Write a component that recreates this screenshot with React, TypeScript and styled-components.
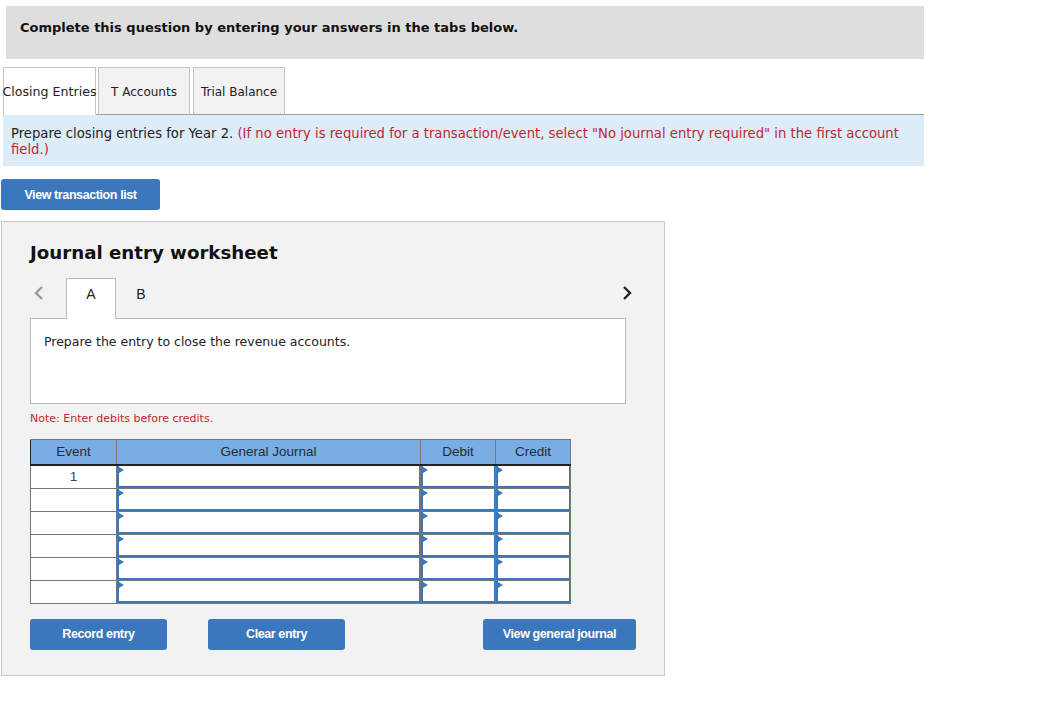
import styled, { createGlobalStyle } from 'styled-components';

const GlobalStyle = createGlobalStyle`
  body {
    margin: 0;
    background: #ffffff;
    font-family: 'DejaVu Sans', Verdana, sans-serif;
    color: #222;
  }
`;

const Page = styled.div`
  width: 1045px;
  padding-top: 6px;
  padding-bottom: 20px;
`;

const Banner = styled.div`
  margin-left: 6px;
  width: 918px;
  height: 53px;
  background: #dedede;
  padding: 13px 0 0 14px;
  box-sizing: border-box;
  font-size: 13px;
  line-height: 18px;
  font-weight: bold;
  color: #111;
`;

const TabBar = styled.div`
  margin: 8px 0 0 3px;
  width: 921px;
  display: flex;
  align-items: flex-end;
  border-bottom: 1px solid #9a9a9a;
`;

const Tab = styled.div<{ active?: boolean }>`
  height: 48px;
  box-sizing: border-box;
  display: flex;
  align-items: center;
  justify-content: center;
  width: ${(p) => (p.active ? '93px' : '92px')};
  margin-right: ${(p) => (p.active ? '2px' : '3px')};
  margin-bottom: -1px;
  padding-top: 1px;
  border: 1px solid #c4c4c4;
  border-bottom: 1px solid ${(p) => (p.active ? '#ffffff' : '#9a9a9a')};
  background: ${(p) => (p.active ? '#ffffff' : '#f2f2f2')};
  font-size: ${(p) => (p.active ? '12.6px' : '12px')};
  color: #222;
  white-space: nowrap;
`;

const InfoBox = styled.div`
  margin-left: 3px;
  width: 921px;
  box-sizing: border-box;
  background: #dcecf9;
  padding: 11px 8px 8px 8px;
  font-size: 13.2px;
  line-height: 16px;
  color: #222;
`;

const Red = styled.span`
  color: #c1272d;
`;

const Button = styled.button<{ w: number }>`
  width: ${(p) => p.w}px;
  height: 31px;
  border: none;
  border-radius: 3px;
  background: #3a77bc;
  color: #ffffff;
  font-family: 'Liberation Sans', Arial, sans-serif;
  font-weight: bold;
  font-size: 12.5px;
  letter-spacing: -0.4px;
  padding: 0;
  cursor: pointer;
`;

const TopButton = styled(Button)`
  display: block;
  margin: 13px 0 0 1px;
`;

const Panel = styled.div`
  margin: 11px 0 0 1px;
  width: 664px;
  height: 455px;
  box-sizing: border-box;
  background: #f2f2f2;
  border: 1px solid #c8c8c8;
  padding: 18px 31px 0 28px;
`;

const Title = styled.h2`
  margin: 0;
  font-size: 18.2px;
  font-weight: bold;
  color: #111;
  line-height: 26px;
`;

const StepRow = styled.div`
  margin-top: 12px;
  display: flex;
  align-items: flex-start;
  height: 40px;
`;

const Chevron = styled.div<{ dark?: boolean }>`
  width: 36px;
  height: 30px;
  box-sizing: border-box;
  padding-left: ${(p) => (p.dark ? '0' : '3px')};
  display: flex;
  align-items: center;
  justify-content: ${(p) => (p.dark ? 'flex-end' : 'flex-start')};
  color: ${(p) => (p.dark ? '#222' : '#999')};
`;

const StepTab = styled.div<{ active?: boolean }>`
  width: 50px;
  height: 41px;
  box-sizing: border-box;
  padding-top: 7px;
  text-align: center;
  font-family: 'Liberation Sans', Arial, sans-serif;
  font-size: 14px;
  line-height: 16px;
  color: #222;
  background: ${(p) => (p.active ? '#ffffff' : 'transparent')};
  border: 1px solid ${(p) => (p.active ? '#bbbbbb' : 'transparent')};
  border-bottom: none;
`;

const Spacer = styled.div`
  flex: 1;
`;

const Prompt = styled.div`
  width: 596px;
  height: 86px;
  box-sizing: border-box;
  background: #ffffff;
  border: 1px solid #bbbbbb;
  padding: 15px 13px;
  font-size: 12.5px;
  color: #222;
`;

const Note = styled.div`
  margin-top: 8px;
  font-size: 11px;
  color: #c1272d;
  line-height: 14px;
`;

const Table = styled.table`
  margin-top: 13px;
  border-collapse: collapse;
  font-family: 'Liberation Sans', Arial, sans-serif;
  font-size: 13.5px;
`;

const Th = styled.th<{ w: number }>`
  width: ${(p) => p.w}px;
  height: 25px;
  padding: 0;
  background: #79ade3;
  color: #2a2a2a;
  font-weight: normal;
  border: 1px solid #777;
  border-bottom: 2px solid #222;
  border-left-color: #222;
  box-sizing: border-box;
`;

const Td = styled.td`
  height: 22px;
  padding: 0;
  border: 1px solid #777;
  background: #ffffff;
  text-align: center;
  color: #444;
  vertical-align: middle;
`;

const InputTd = styled.td`
  height: 22px;
  padding: 0;
  border: 1px solid #777;
  background: #ffffff;
`;

const Field = styled.div`
  height: 22px;
  box-sizing: border-box;
  border-left: 2px solid #3a77bc;
  border-right: 1px solid #3a77bc;
  border-bottom: 2px solid #3a77bc;
  position: relative;

  &::before {
    content: '';
    position: absolute;
    left: 0;
    top: 1px;
    border-top: 3px solid transparent;
    border-bottom: 3px solid transparent;
    border-left: 5px solid #3a77bc;
  }
`;

const ButtonRow = styled.div`
  margin-top: 15px;
  display: flex;
  align-items: center;
  width: 606px;
`;

const ChevronIcon = ({ dir }: { dir: 'left' | 'right' }) => (
  <svg width="12" height="16" viewBox="0 0 12 16">
    <path
      d={dir === 'left' ? 'M9 2 L3 8 L9 14' : 'M3 2 L9 8 L3 14'}
      fill="none"
      stroke="currentColor"
      strokeWidth="2.4"
    />
  </svg>
);

const rows = [1, 2, 3, 4, 5, 6];

const App = () => {
  return (
    <Page>
      <GlobalStyle />
      <Banner>Complete this question by entering your answers in the tabs below.</Banner>
      <TabBar>
        <Tab active>Closing Entries</Tab>
        <Tab>T Accounts</Tab>
        <Tab>Trial Balance</Tab>
      </TabBar>
      <InfoBox>
        Prepare closing entries for Year 2.{' '}
        <Red>
          (If no entry is required for a transaction/event, select "No journal entry required" in the first
          account field.)
        </Red>
      </InfoBox>
      <TopButton w={159}>View transaction list</TopButton>
      <Panel>
        <Title>Journal entry worksheet</Title>
        <StepRow>
          <Chevron>
            <ChevronIcon dir="left" />
          </Chevron>
          <StepTab active>A</StepTab>
          <StepTab>B</StepTab>
          <Spacer />
          <Chevron dark>
            <ChevronIcon dir="right" />
          </Chevron>
        </StepRow>
        <Prompt>Prepare the entry to close the revenue accounts.</Prompt>
        <Note>Note: Enter debits before credits.</Note>
        <Table>
          <thead>
            <tr>
              <Th w={86}>Event</Th>
              <Th w={304}>General Journal</Th>
              <Th w={75}>Debit</Th>
              <Th w={75}>Credit</Th>
            </tr>
          </thead>
          <tbody>
            {rows.map((r) => (
              <tr key={r}>
                <Td>{r === 1 ? '1' : ''}</Td>
                <InputTd>
                  <Field />
                </InputTd>
                <InputTd>
                  <Field />
                </InputTd>
                <InputTd>
                  <Field />
                </InputTd>
              </tr>
            ))}
          </tbody>
        </Table>
        <ButtonRow>
          <Button w={137}>Record entry</Button>
          <Button w={137} style={{ marginLeft: 41 }}>
            Clear entry
          </Button>
          <Spacer />
          <Button w={153}>View general journal</Button>
        </ButtonRow>
      </Panel>
    </Page>
  );
};

export default App;
